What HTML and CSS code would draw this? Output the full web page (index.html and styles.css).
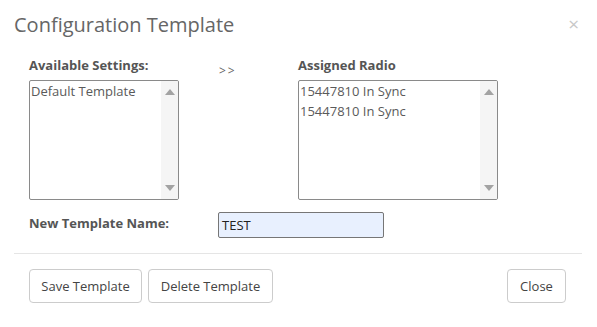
FILE: index.html
```html
<!DOCTYPE html>
<html>
<head>
<meta charset="utf-8">
<link rel="stylesheet" href="styles.css">
</head>
<body>
<div class="modal">
  <div class="modal-header">
    <h4 class="modal-title">Configuration Template</h4>
    <span class="close-x">&times;</span>
  </div>
  <div class="modal-body">
    <div class="lists">
      <div class="col col-left">
        <div class="label">Available Settings:</div>
        <div class="listbox">
          <div class="items">
            <div class="item">Default Template</div>
          </div>
          <div class="scroll"><span class="arr up"></span><span class="arr down"></span></div>
        </div>
      </div>
      <div class="col col-mid"><span class="move">&gt;&gt;</span></div>
      <div class="col col-right">
        <div class="label">Assigned Radio</div>
        <div class="listbox wide">
          <div class="items">
            <div class="item">15447810 In Sync</div>
            <div class="item">15447810 In Sync</div>
          </div>
          <div class="scroll"><span class="arr up"></span><span class="arr down"></span></div>
        </div>
      </div>
    </div>
    <div class="name-row">
      <div class="label name-label">New Template Name:</div>
      <div class="input">TEST</div>
    </div>
  </div>
  <div class="modal-footer">
    <div class="left-btns">
      <button class="btn save">Save Template</button>
      <button class="btn del">Delete Template</button>
    </div>
    <button class="btn close">Close</button>
  </div>
</div>
</body>
</html>
```
FILE: styles.css
```css
* { box-sizing: border-box; }
html, body { margin: 0; padding: 0; background: #fff; }
body { width: 597px; height: 327px; overflow: hidden; font-family: "Open Sans", "Noto Sans", sans-serif; color: #555; }

.modal { width: 597px; }

.modal-header {
  height: 50px;
  display: flex;
  align-items: center;
  justify-content: space-between;
  padding: 0 18px 0 14px;
}
.modal-title {
  margin: 0;
  font-size: 20px;
  font-weight: 400;
  color: #666;
  line-height: 26px;
}
.close-x {
  font-size: 19px;
  color: #c8c8c8;
  line-height: 20px;
  margin-top: -2px;
}

.modal-body { padding: 7px 0 0 29px; }

.lists {
  display: grid;
  grid-template-columns: 150px 119px 200px;
}
.label {
  font-size: 13px;
  font-weight: 700;
  color: #555;
  line-height: 16px;
  height: 23px;
}
.col-mid { padding: 1px 0 0 40px; }
.move { font-size: 12px; color: #666; letter-spacing: 2px; }

.listbox {
  height: 120px;
  border: 1px solid #8a8a8a;
  border-radius: 2px;
  display: flex;
  overflow: hidden;
}
.items { flex: 1; padding-top: 0; }
.item {
  font-size: 13px;
  line-height: 20px;
  color: #5a5a5a;
  padding-left: 1px;
  white-space: nowrap;
}
.scroll {
  width: 17px;
  background: #f5f5f5;
  display: flex;
  flex-direction: column;
  justify-content: space-between;
  align-items: center;
  padding: 8px 0 8px;
}
.arr { width: 0; height: 0; border-left: 5px solid transparent; border-right: 5px solid transparent; }
.arr.up { border-bottom: 6px solid #a3a3a3; }
.arr.down { border-top: 6px solid #a3a3a3; }

.name-row {
  display: flex;
  align-items: center;
  margin-top: 12px;
}
.name-label { width: 189px; height: auto; margin-top: -4px; }
.input {
  width: 166px;
  height: 26px;
  background: #e8f0fe;
  border: 1px solid #767676;
  border-radius: 2px;
  font-size: 13px;
  color: #222;
  padding: 3px 0 0 3px;
  line-height: 18px;
}

.modal-footer {
  margin: 15px 15px 0 14px;
  border-top: 1px solid #e5e5e5;
  padding: 15px 16px 0 15px;
  display: flex;
  justify-content: space-between;
}
.left-btns { display: flex; gap: 6px; }
.btn {
  font-family: inherit;
  font-size: 13px;
  color: #444;
  background: #fff;
  border: 1px solid #ccc;
  border-radius: 4px;
  height: 34px;
  padding: 0;
  cursor: pointer;
}
.save { width: 113px; }
.del { width: 125px; }
.close { width: 59px; }
```
